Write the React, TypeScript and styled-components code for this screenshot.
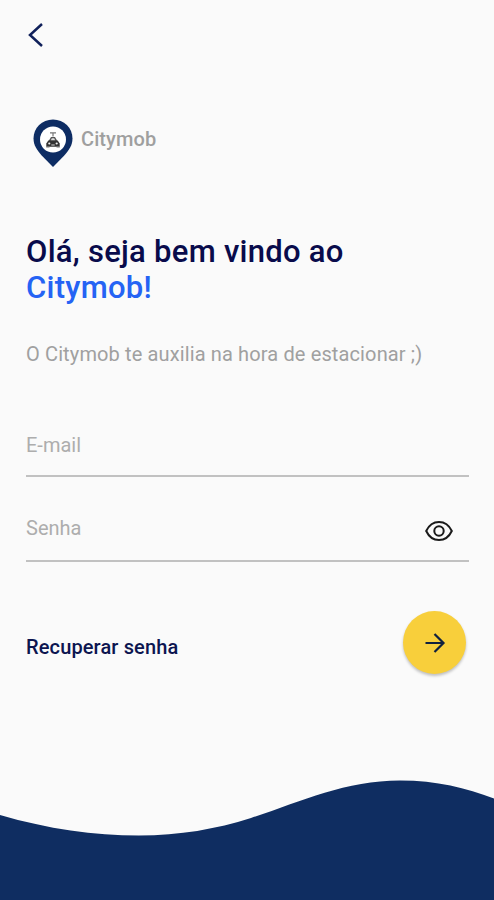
import React from 'react';
import styled, { createGlobalStyle } from 'styled-components';

const GlobalStyle = createGlobalStyle`
  * { box-sizing: border-box; }
  body { margin: 0; background: #fafafa; }
  button, input { font: inherit; border: 0; padding: 0; background: none; }
`;

const Screen = styled.div`
  width: 494px;
  height: 900px;
  display: flex;
  flex-direction: column;
  overflow: hidden;
  background: #fafafa;
  color: #0c1550;
  font-family: Roboto, sans-serif;
`;

const Content = styled.main`
  flex: 1;
  padding: 20px 25px 0 26px;
`;

const BackButton = styled.button`
  display: block;
  width: 20px;
  height: 30px;
  cursor: pointer;
  svg { display: block; }
`;

const Brand = styled.div`
  display: flex;
  align-items: flex-start;
  gap: 8px;
  height: 50px;
  margin: 69px 0 0 7px;
`;

const BrandName = styled.span`
  font-size: 20px;
  line-height: 24px;
  margin-top: 8px;
  font-weight: 500;
  letter-spacing: 0.1px;
  color: #9f9f9f;
`;

const Title = styled.h1`
  margin: 65px 0 0;
  font-size: 31px;
  line-height: 36px;
  font-weight: 500;
  letter-spacing: 0.27px;
  color: #090b4b;
`;

const Accent = styled.span`
  display: block;
  color: #2563f4;
`;

const Subtitle = styled.p`
  margin: 36px 0 0;
  font-size: 20px;
  line-height: 24px;
  letter-spacing: 0.13px;
  color: #a0a0a0;
`;

const Form = styled.form`
  margin-top: 62px;
`;

const Field = styled.div<{ $height: number; $inset: number }>`
  display: flex;
  align-items: flex-start;
  height: ${({ $height }) => $height}px;
  padding-top: ${({ $inset }) => $inset}px;
  border-bottom: 2px solid #c1c1c1;
`;

const Input = styled.input`
  flex: 1;
  min-width: 0;
  height: 30px;
  font-size: 20px;
  color: #0c1550;
  outline: none;
  &::placeholder { color: #adadad; opacity: 1; }
`;

const VisibilityButton = styled.button`
  width: 28px;
  height: 22px;
  margin: 7px 16px 0 0;
  cursor: pointer;
  svg { display: block; }
`;

const Actions = styled.div`
  display: flex;
  align-items: center;
  justify-content: space-between;
  height: 64px;
  margin-top: 49px;
  padding-right: 3px;
`;

const RecoverLink = styled.a`
  margin-top: 8px;
  font-size: 20px;
  line-height: 24px;
  font-weight: 500;
  letter-spacing: 0.13px;
  color: #0c1550;
  cursor: pointer;
`;

const SubmitButton = styled.button`
  display: grid;
  place-items: center;
  width: 63px;
  height: 63px;
  margin-bottom: 1px;
  border-radius: 50%;
  background: #f8cf3b;
  box-shadow: 0 2px 3px rgba(0, 0, 0, 0.24);
  color: #10213f;
  cursor: pointer;
`;

const Wave = styled.svg`
  display: block;
  flex: none;
  width: 494px;
  height: 130px;
`;

const PinLogo = () => (
  <svg width="40" height="49" viewBox="0 0 40 49" aria-hidden="true">
    <path d="M20 .5C9 .5 .5 9 .5 19.5c0 6.8 3.6 11.7 8.2 17L20 48l11.3-11.5c4.6-5.3 8.2-10.2 8.2-17C39.5 9 31 .5 20 .5Z" fill="#0d2c63" />
    <circle cx="20" cy="20.5" r="13" fill="#fff" />
    <path d="M17 13.8h6M20 14v3.5" stroke="#777" strokeWidth="1.2" />
    <path d="M15.5 22.2 18 18h4l2.5 4.2Z" fill="#555" />
    <path d="M17.8 21.5h4.4l-1-2.2h-2.4Z" fill="#ddd" />
    <path d="M13.3 24.5 15.3 21.5h9.4l2 3v3.3H13.3Z" fill="#333" />
    <circle cx="16.3" cy="24.5" r="1.1" fill="#eee" />
    <circle cx="23.7" cy="24.5" r="1.1" fill="#eee" />
    <path d="M18.3 26h3.4" stroke="#ddd" />
    <path d="M13.2 28h3.3M23.5 28h3.3" stroke="#777" />
  </svg>
);

export default function App() {
  return (
    <>
      <GlobalStyle />
      <Screen>
        <Content>
          <BackButton aria-label="Voltar">
            <svg width="20" height="30" viewBox="0 0 20 30" fill="none">
              <path d="M16 4 4 15l12 11" stroke="#10205a" strokeWidth="2.5" />
            </svg>
          </BackButton>
          <Brand>
            <PinLogo />
            <BrandName>Citymob</BrandName>
          </Brand>
          <Title>
            Olá, seja bem vindo ao
            <Accent>Citymob!</Accent>
          </Title>
          <Subtitle>O Citymob te auxilia na hora de estacionar ;)</Subtitle>
          <Form onSubmit={(event) => event.preventDefault()}>
            <Field $height={49} $inset={2}>
              <Input type="email" placeholder="E-mail" aria-label="E-mail" />
            </Field>
            <Field $height={85} $inset={36}>
              <Input type="password" placeholder="Senha" aria-label="Senha" />
              <VisibilityButton type="button" aria-label="Mostrar senha">
                <svg width="28" height="22" viewBox="0 0 28 22" fill="none" stroke="#1a1a1a" strokeWidth="2">
                  <path d="M1.2 11C4 5 8.5 2 14 2s10 3 12.8 9C24 17 19.5 20 14 20S4 17 1.2 11Z" />
                  <circle cx="14" cy="11" r="4.7" />
                </svg>
              </VisibilityButton>
            </Field>
            <Actions>
              <RecoverLink>Recuperar senha</RecoverLink>
              <SubmitButton aria-label="Entrar">
                <svg width="22" height="22" viewBox="0 0 22 22" fill="none" stroke="currentColor" strokeWidth="2.2">
                  <path d="M1.5 11h17M10.5 2l9 9-9 9" />
                </svg>
              </SubmitButton>
            </Actions>
          </Form>
        </Content>
        <Wave viewBox="0 770 494 130" aria-hidden="true">
          <path d="M0 815C48 829 94 835.5 139 835.5C180 835.5 216 829 251 818C300 802 345 780.5 400 780.5C437 780.5 466 788 494 798.5V900H0Z" fill="#0f2d61" />
        </Wave>
      </Screen>
    </>
  );
}
